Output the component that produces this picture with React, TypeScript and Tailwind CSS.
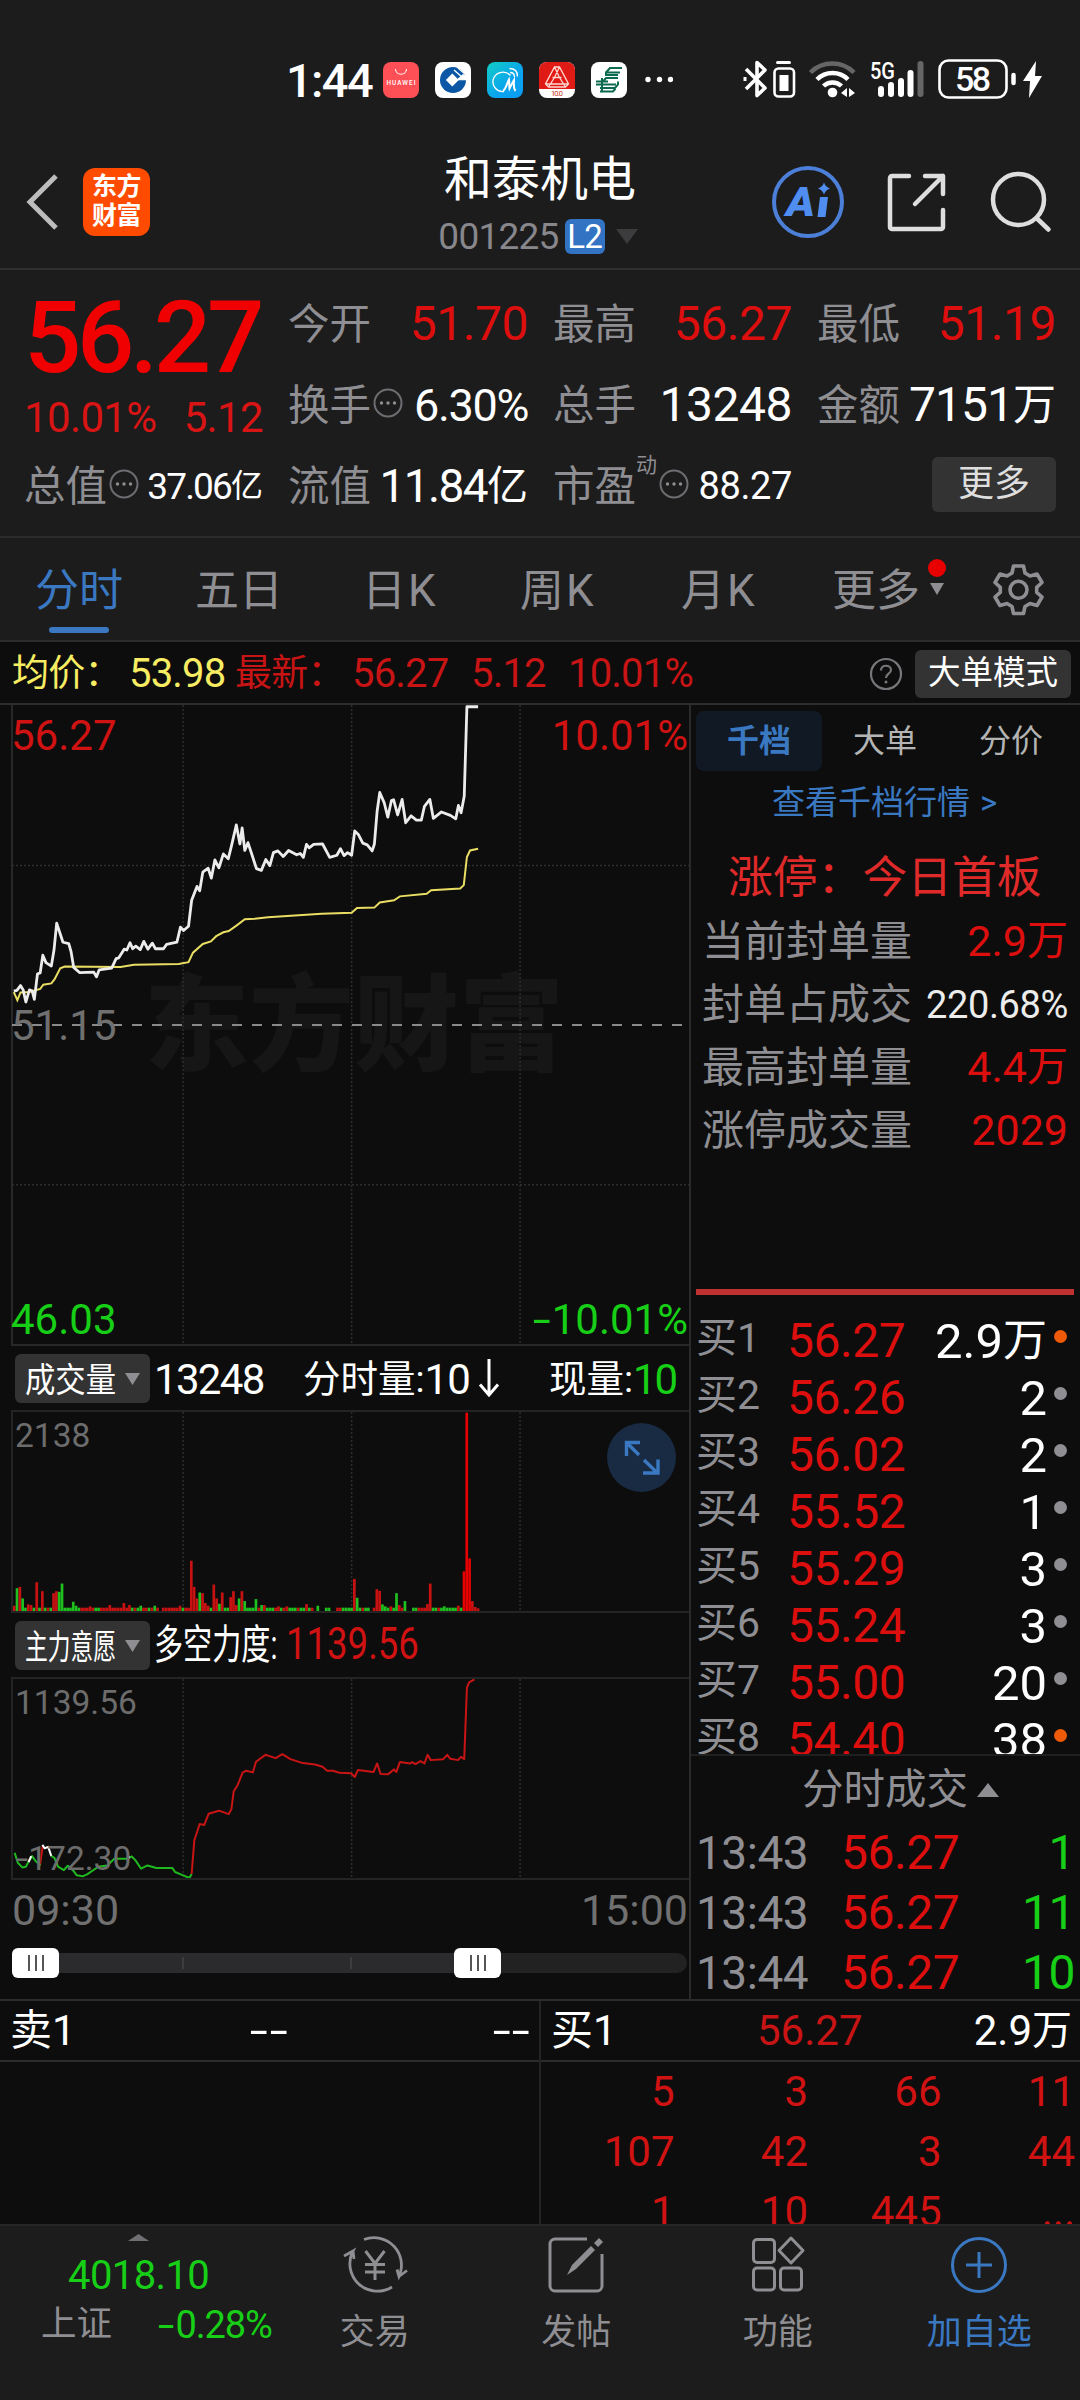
import clsx from "clsx";
import type { ReactNode } from "react";

const quotes = [
  { label: "今开", value: "51.70" },
  { label: "最高", value: "56.27" },
  { label: "最低", value: "51.19" },
];

const periods = [
  { label: "五日", className: "left-[195px]" },
  { label: "日K", className: "left-[362px] tracking-[2px]" },
  { label: "周K", className: "left-[520px] tracking-[2px]" },
  { label: "月K", className: "left-[681px] tracking-[2px]" },
];

const limitStats = [
  { label: "当前封单量", value: "2.9", unit: "万" },
  { label: "封单占成交", value: "220.68%", white: true },
  { label: "最高封单量", value: "4.4", unit: "万" },
  { label: "涨停成交量", value: "2029" },
];

const bids = [
  { price: "56.27", qty: "2.9", unit: "万", hot: true },
  { price: "56.26", qty: "2" },
  { price: "56.02", qty: "2" },
  { price: "55.52", qty: "1" },
  { price: "55.29", qty: "3" },
  { price: "55.24", qty: "3" },
  { price: "55.00", qty: "20" },
  { price: "54.40", qty: "38", hot: true },
];

const trades = [
  { time: "13:43", price: "56.27", qty: "1" },
  { time: "13:43", price: "56.27", qty: "11" },
  { time: "13:44", price: "56.27", qty: "10" },
];

const queue = ["5", "3", "66", "11", "107", "42", "3", "44", "1", "10", "445", "..."];

const priceLine =
  "31,695 38,693 46,682 52,692 58,720 66,692 72,694 77,714 84,655 90,653 96,612 103,629 115,637 121,600 127,538 141,582 154,585 159,603 165,640 178,652 210,651 216,662 222,646 250,642 260,620 266,618 278,598 284,600 291,583 297,597 304,591 314,599 322,580 331,598 341,584 348,597 366,597 373,587 396,582 404,547 411,555 422,545 429,485 441,453 447,463 454,420 466,411 473,434 481,392 490,410 500,378 511,389 518,360 529,311 537,355 542,318 548,370 555,352 564,380 574,412 585,416 595,391 604,405 612,375 622,371 634,384 646,370 664,380 672,377 679,386 686,356 692,364 702,356 722,355 738,386 754,381 762,366 770,382 778,375 787,381 794,325 802,333 812,353 822,357 833,371 838,355 844,280 850,236 860,260 868,293 876,255 881,253 890,288 900,252 908,306 920,290 932,300 943,300 950,268 962,252 970,296 988,281 1008,289 1020,297 1026,266 1032,283 1039,245 1045,38 1070,38";

const averageLine =
  "31,697 39,716 46,698 66,697 90,690 97,680 115,677 122,668 135,642 145,638 270,639 300,634 400,632 422,628 432,606 454,586 472,580 484,568 500,559 512,556 530,543 548,529 570,528 600,524 720,516 787,514 799,503 838,502 850,490 882,485 895,476 955,470 965,462 1030,458 1038,450 1045,385 1052,370 1070,366";

const forceLines = [
  { color: "#1fb81f", points: "33,730 40,760 50,774 58,772 66,752 72,740 80,755 88,765 92,765" },
  { color: "#ffffff", points: "64,758 70,740" },
  { color: "#c81414", points: "90,765 93,735 96,708" },
  { color: "#ffffff", points: "95,706 100,716 108,712 115,740" },
  {
    color: "#1fb81f",
    points:
      "115,740 122,745 130,772 143,782 152,769 165,785 172,798 185,801 195,795 220,772 240,768 256,748 285,748 295,741 303,752 316,778 330,768 350,776 386,776 392,788 410,798 424,806 429,794",
  },
  { color: "#ffffff", points: "285,749 290,741" },
  {
    color: "#c81414",
    points:
      "429,794 435,692 447,643 457,646 467,612 490,603 500,607 512,613 518,598 523,545 532,525 543,488 551,482 566,487 573,455 594,434 617,444 632,432 650,447 678,459 705,463 722,470 732,482 745,482 760,488 786,490 794,501 801,480 836,486 844,460 852,492 868,493 882,478 887,486 895,456 918,460 922,456 930,462 941,453 950,460 957,434 964,450 992,447 1001,434 1008,446 1025,450 1032,440 1039,447 1045,232 1050,215 1062,206",
  },
];

// one letter per minute: r = up, g = down, . = no trade
const volumeColors =
  "rgrggrrgrg" +
  "rgrgrrgggg" +
  "ggggrrrrrg" +
  "grrrrrrrrr" +
  "rrgrggrrgr" +
  "gr.rrrrrrr" +
  "grrrrrgrrr" +
  "grrgrggrrr" +
  "grgggggrgr" +
  "gggrrgrrgg" +
  "grggrgr.g." +
  ".gg..rrggg" +
  "grggrgg.rr" +
  "rgggrggrrg" +
  "..ggrrrrrg" +
  "grggggggrg" +
  "rrrrrr";

// bar heights by minute, everything else is a stub
const volumeHeights: Record<number, number> = {
  0: 16, 1: 69, 2: 73, 3: 38, 5: 20, 6: 18, 8: 87, 10: 60, 14: 54, 15: 60, 16: 58, 17: 83,
  21: 28, 22: 16, 27: 14, 34: 18, 39: 24, 41: 18, 45: 16, 50: 16, 59: 16, 63: 152, 64: 73,
  65: 38, 66: 56, 67: 54, 68: 24, 69: 16, 71: 80, 72: 38, 73: 22, 74: 56, 77: 42, 78: 60,
  79: 18, 80: 38, 81: 60, 82: 30, 86: 36, 88: 18, 89: 18, 94: 14, 97: 14, 104: 21, 108: 16,
  121: 97, 122: 40, 129: 66, 130: 61, 131: 20, 132: 14, 134: 14, 136: 54, 137: 18, 139: 30,
  147: 21, 148: 83, 153: 14, 158: 16, 160: 120, 161: 600, 162: 159, 163: 30, 164: 12, 165: 8,
};

const More = () => (
  <svg className="size-[30px] shrink-0 -mt-1 ml-0.5" viewBox="0 0 30 30" fill="none">
    <circle cx="15" cy="15" r="13.5" stroke="#6e6e72" strokeWidth="2" />
    <circle cx="8.5" cy="15" r="1.7" fill="#8e8e93" />
    <circle cx="15" cy="15" r="1.7" fill="#8e8e93" />
    <circle cx="21.5" cy="15" r="1.7" fill="#8e8e93" />
  </svg>
);

const Down = ({ className }: { className?: string }) => (
  <svg className={className} viewBox="0 0 10 10" preserveAspectRatio="none" fill="currentColor">
    <path d="M0 0h10L5 10z" />
  </svg>
);

// Roboto's hyphen is too short for a minus sign
const Dash = () => <span className="inline-block scale-x-[1.55] px-[4px] tracking-normal">-</span>;

const StatusBar = () => (
  <div className="h-[122px] pt-[58px] pl-[286px] flex items-start text-white">
    <div className="w-[97px] h-[44px] flex items-center text-[47px] font-medium leading-none tracking-[-0.035em]">
      1:44
    </div>
    <div className="flex gap-4 mt-1">
      <svg className="size-9" viewBox="0 0 36 36">
        <rect width="36" height="36" rx="8" fill="#fd5056" />
        <path d="M12.5 7c0 7 11 7 11 0" stroke="#fff" fill="none" strokeWidth="1.1" />
        <text x="18" y="22.6" fontSize="6.4" fontWeight="500" fill="#fff" textAnchor="middle" textLength="29">
          HUAWEI
        </text>
      </svg>
      <svg className="size-9" viewBox="0 0 36 36">
        <rect width="36" height="36" rx="8" fill="#fff" />
        <circle cx="18" cy="18" r="13" fill="#0b57a6" />
        <path d="M17.3 11.5l6.5 6.5-6.5 6.5-6.5-6.5z" fill="#fff" />
        <path d="M21 18.3h11V14l-4-2z" fill="#fff" />
        <path d="M19 8l8.5 7.5M22 5l9 8" stroke="#fff" strokeWidth="1.3" fill="none" />
      </svg>
      <svg className="size-9" viewBox="0 0 36 36">
        <defs>
          <linearGradient id="midea" x1="0" y1="0" x2="1" y2="1">
            <stop offset="0" stopColor="#12cdc4" />
            <stop offset=".6" stopColor="#0aa4ef" />
            <stop offset="1" stopColor="#0a9cf2" />
          </linearGradient>
        </defs>
        <rect width="36" height="36" rx="8" fill="url(#midea)" />
        <path d="M23.5 13.5A10 9.7 0 1 0 17 29.5" stroke="#fff" strokeWidth="1.3" fill="none" />
        <path d="M16 29c3-2 4-8 6-11.5.5 3 0 6 .5 9 1.5-3 3-6 4.5-8.5 0 3.5-1 8 1.500 11" stroke="#fff" strokeWidth="2" fill="none" />
        <path d="M23 10.5c3 0 4.5 1.5 4.5 4.5M22.5 6.5c5 0 8 3 8 8" stroke="#fff" strokeWidth="1.3" fill="none" />
      </svg>
      <svg className="size-9" viewBox="0 0 36 36">
        <rect width="36" height="36" rx="8" fill="#fff" />
        <path d="M8 0h20a8 8 0 0 1 8 8v19H0V8a8 8 0 0 1 8-8z" fill="#e01a15" />
        <path
          d="M15.5 5h5l9 17-3 3h-17l-3-3zM15.5 5l5 10.5 6 9.5M20.5 5l-5 10.5-6 9.5M6.5 22h23M13.5 15.5h9"
          stroke="#ffd9cf"
          strokeWidth="1.3"
          fill="none"
        />
        <text x="18" y="34.3" fontSize="7.5" fill="#c9361c" textAnchor="middle" textLength="12">
          10.0
        </text>
      </svg>
      <svg className="size-9" viewBox="0 0 36 36">
        <rect width="36" height="36" rx="8" fill="#fff" />
        <path
          d="M31 6H19l-4 4.5v2.5h12M29 10.5H16M5 19.5h12M27 16H15l-3 3.5M27 19.5v3L24 26H9M5 22.5h20M9 29.5h13l2.5-3M11 16v13"
          stroke="#0c6b4f"
          strokeWidth="2"
          fill="none"
        />
      </svg>
    </div>
    <svg className="w-7 h-9 mt-1 ml-[18px]" viewBox="0 0 28 36" fill="#fff">
      <circle cx="3" cy="17.5" r="2.7" />
      <circle cx="14.500" cy="17.5" r="2.7" />
      <circle cx="25.500" cy="17.5" r="2.7" />
    </svg>
    <svg className="w-[310px] h-[44px] ml-[67px]" viewBox="740 58 310 44" fill="none" stroke="#fff">
      <path d="M746 69l19 19-8 7.5v-33l8 7.5-19 19" strokeWidth="3.6" strokeLinejoin="round" />
      <path d="M745 77v4" strokeWidth="3" />
      <rect x="774.5" y="68.5" width="19.5" height="28" rx="4" strokeWidth="2.6" />
      <path d="M777.5 62.500h12" strokeWidth="3" strokeLinecap="round" />
      <rect x="779.5" y="75" width="9" height="16" fill="#fff" stroke="none" />
      <g strokeWidth="4.5">
        <path d="M810.5 72.5a31 31 0 0 1 43.5 0" stroke="#666" />
        <path d="M817 79.5a22 22 0 0 1 31 0" />
        <path d="M823.5 86a13 13 0 0 1 18 0" />
      </g>
      <circle cx="832.5" cy="92.5" r="4.8" fill="#fff" stroke="none" />
      <path d="M841 93l6-5v9zM849 88v9l6-4z" fill="#fff" stroke="none" />
      <text x="870" y="79" fontSize="23" fontWeight="500" fill="#fff" stroke="none" textLength="25" lengthAdjust="spacingAndGlyphs">
        5G
      </text>
      <g strokeWidth="6" strokeLinecap="round">
        <path d="M881 89v5M891 85v9M901 81v13M910.5 73v21" />
        <path d="M920.5 64v30" stroke="#666" />
      </g>
      <rect x="939.5" y="60.5" width="67" height="37" rx="9" strokeWidth="2.6" />
      <text x="955" y="91" fontSize="34" fontWeight="500" fill="#fff" stroke="none" textLength="36">
        58
      </text>
      <path d="M1013.5 75v8" strokeWidth="4.5" strokeLinecap="round" />
      <path d="M1036 61l-13 20h7l-1 17 13-22h-7z" fill="#fff" stroke="none" />
    </svg>
  </div>
);

const Header = () => (
  <header className="h-[148px] border-b-2 border-[#2f2f2f] flex items-start">
    <svg className="w-[34px] h-[60px] ml-[26px] mt-[50px]" viewBox="0 0 34 60" fill="none">
      <path d="M30 4L4 30l26 26" stroke="#bdbdbd" strokeWidth="5" />
    </svg>
    <div className="w-[67px] h-[68px] ml-[23px] mt-[46px] rounded-xl bg-[#ff4b00] text-white font-bold text-[25px] leading-[29px] tracking-[-0.5px] flex flex-col items-center justify-center pb-0.5">
      <span>东方</span>
      <span>财富</span>
    </div>
    <div className="w-[390px] ml-[194px] mt-[29px] flex flex-col items-center">
      <div className="h-[58px] ml-0.5 flex items-center text-[48px] leading-none text-white">和泰机电</div>
      <div className="h-[54px] flex items-center text-[#87878c] text-[37px] leading-none tracking-[-0.02em]">
        001225
        <span className="w-10 h-[35px] ml-[6px] rounded-md bg-[#3273c4] text-white text-[33px] flex items-center justify-center">
          L2
        </span>
        <Down className="w-[22px] h-[15px] ml-[11px] mr-0.5 text-[#3c3c3e]" />
      </div>
    </div>
    <svg className="w-[290px] h-[80px] ml-[36px] mt-[40px]" viewBox="770 162 290 80" fill="none">
      <circle cx="808" cy="202" r="34" stroke="#4c80d8" strokeWidth="4" />
      <text x="786" y="215.5" fontSize="41" fontWeight="900" fontStyle="italic" fill="#4f8df0" textLength="29" lengthAdjust="spacingAndGlyphs">
        A
      </text>
      <path d="M820 197h8l-2.5 20h-8z" fill="#4f8df0" />
      <path d="M824 182.5q1.5 4.5 6 6-4.5 1.5-6 6-1.5-4.5-6-6 4.5-1.5 6-6z" fill="#4f8df0" />
      <g stroke="#dedede" strokeWidth="4.5" strokeLinecap="round" strokeLinejoin="round">
        <path d="M909 176h-17a2 2 0 0 0-2 2v49a2 2 0 0 0 2 2h49a2 2 0 0 0 2-2v-17" />
        <path d="M925 176h18v18M943 176l-28 28" />
        <circle cx="1018.5" cy="199.5" r="25.5" />
        <path d="M1037 218.5l11.5 11" />
      </g>
    </svg>
  </header>
);

const Cell = ({ label, icon, sup, children }: { label: string; icon?: boolean; sup?: string; children: ReactNode }) => (
  <div className="flex items-center">
    <span className="text-[#8e8e93] text-[41.5px] pt-0.5">{label}</span>
    {sup && <sup className="text-[#8e8e93] text-[21px] -top-5 leading-none">{sup}</sup>}
    {icon && <More />}
    <span className="ml-auto flex items-center pt-px">{children}</span>
  </div>
);

const Summary = () => (
  <section className="h-[268px] pt-[13px] pl-6 border-b-2 border-[#2c2c2c] grid grid-cols-[239px_240px_239px_239px] auto-rows-[81px] gap-x-[25px] whitespace-nowrap leading-none text-white">
    <div className="row-span-2 flex flex-col">
      <div className="h-[108px] flex items-center text-[#f00000] font-medium text-[101px] tracking-[-0.043em]">
        56.27
      </div>
      <div className="h-[54px] flex items-center justify-between text-[#d81414] text-[42px] tracking-[-0.015em]">
        <span>10.01%</span>
        <span>5.12</span>
      </div>
    </div>
    {quotes.map((q) => (
      <Cell key={q.label} label={q.label}>
        <span className="text-[#dc0e0e] text-[48px] tracking-[-0.01em]">{q.value}</span>
      </Cell>
    ))}
    <Cell label="换手" icon>
      <span className="text-[45px] tracking-[-0.03em]">6.30%</span>
    </Cell>
    <Cell label="总手">
      <span className="text-[48px] tracking-[-0.01em]">13248</span>
    </Cell>
    <Cell label="金额">
      <span className="text-[48px] tracking-[-0.02em]">7151</span>
      <span className="text-[43px]">万</span>
    </Cell>
    <Cell label="总值" icon>
      <span className="text-[37px] tracking-[-0.05em]">37.06</span>
      <span className="text-[32px]">亿</span>
    </Cell>
    <Cell label="流值">
      <span className="text-[46px] tracking-[-0.035em]">11.84</span>
      <span className="text-[41px]">亿</span>
    </Cell>
    <Cell label="市盈" icon sup="动">
      <span className="text-[38px] tracking-[-0.01em]">88.27</span>
    </Cell>
    <div className="flex items-center justify-end pb-[3px]">
      <div className="w-[124px] h-[55px] rounded-md bg-[#333] text-[#dedede] text-[36px] flex items-center justify-center">
        更多
      </div>
    </div>
  </section>
);

const Tabs = () => (
  <nav className="h-[104px] border-b-2 border-[#2c2c2c] relative text-[44px] leading-none text-[#8e8e93]">
    <div className="absolute left-[35px] top-[31px] text-[#3a78c2]">
      分时
      <div className="w-[60px] h-1.5 rounded-full bg-[#3a78c2] ml-[14px] mt-[14px]" />
    </div>
    {periods.map((p) => (
      <span key={p.label} className={clsx("absolute top-[31px]", p.className)}>
        {p.label}
      </span>
    ))}
    <span className="absolute left-[832px] top-[31px]">更多</span>
    <span className="absolute left-[928px] top-[21px] size-[18px] rounded-full bg-[#e80000]" />
    <Down className="absolute left-[930px] top-[45px] w-[14px] h-3" />
    <svg className="absolute left-[992px] top-[25px] size-[53px]" viewBox="0 0 53 53" fill="none" stroke="#8e8e93" strokeWidth="3.6">
      <path
        strokeLinejoin="round"
        d="M21.5 3h10l1.5 7 5 3 7-2 5 8.5-5.3 4.8v5L50 34l-5 8.5-7-2-5 3-1.5 7h-10l-1.5-7-5-3-7 2-5-8.5 5.3-4.7v-5L3 19.5 8 11l7 2 5-3z"
      />
      <circle cx="26.5" cy="26.8" r="8.5" />
    </svg>
  </nav>
);

const PriceBar = () => (
  <div className="h-[63px] border-b-2 border-[#2e2e2e] pl-3 pt-[2px] pr-[9px] flex items-center text-[40px] leading-none whitespace-nowrap tracking-[-0.02em]">
    <div className="w-[223px] text-[#f7ec62] flex items-center">
      <span className="w-[117px] text-[37px]">均价：</span>53.98
    </div>
    <div className="text-[#c81414] flex items-center">
      <span className="w-[117px] text-[37px]">最新：</span>
      <span className="w-[119px]">56.27</span>
      <span className="w-[97px]">5.12</span>
      <span>10.01%</span>
    </div>
    <svg className="size-[34px] ml-auto mr-3" viewBox="0 0 34 34" fill="none">
      <circle cx="17" cy="17" r="15" stroke="#77777b" strokeWidth="2.2" />
      <path d="M12 13.5c0-6.5 10-6 10-.5 0 4-5 3.5-5 8" stroke="#77777b" strokeWidth="2.2" />
      <circle cx="17" cy="25" r="1.5" fill="#77777b" />
    </svg>
    <div className="w-[156px] h-12 rounded-md bg-[#333] text-white text-[32.5px] tracking-normal flex items-center justify-center">
      大单模式
    </div>
  </div>
);

const Grid = ({ top, bottom }: { top: number; bottom: number }) => (
  <g stroke="#2d2d2d" strokeWidth="1.5" strokeDasharray="2 2">
    {[410, 787, 1164].map((x) => (
      <path key={x} d={`M${x} ${top}V${bottom}`} vectorEffect="non-scaling-stroke" />
    ))}
  </g>
);

const PriceChart = () => (
  <div className="relative h-[641px] ml-[11px] border-l-2 border-b-2 border-[#282828] text-[42px] leading-none">
    <div className="absolute inset-x-0 top-[269px] pl-[131px] text-[105px] font-black text-[#161616]">东方财富</div>
    <svg className="absolute top-0 -left-px w-[677px] h-full" viewBox="27 34 1515 1476" preserveAspectRatio="none" fill="none">
      <Grid top={34} bottom={1510} />
      <g stroke="#2d2d2d" strokeWidth="1.5" strokeDasharray="2 2">
        <path d="M27 405H1542" vectorEffect="non-scaling-stroke" />
        <path d="M27 1142H1542" vectorEffect="non-scaling-stroke" />
      </g>
      <path d="M27 773H1530" stroke="#8a8a8a" strokeWidth="2" strokeDasharray="10 10" vectorEffect="non-scaling-stroke" />
      <polyline points={averageLine} stroke="#e9de63" strokeWidth="2" vectorEffect="non-scaling-stroke" />
      <polyline points={priceLine} stroke="#ececec" strokeWidth="2.8" strokeLinejoin="round" vectorEffect="non-scaling-stroke" />
    </svg>
    <span className="absolute -left-0.5 top-[10px] text-[#d01212]">56.27</span>
    <span className="absolute right-px top-[10px] text-[#d01212]">10.01%</span>
    <span className="absolute -left-0.5 top-[300px] text-[#707070]">51.15</span>
    <span className="absolute -left-0.5 bottom-[3px] text-[#17cf17]">46.03</span>
    <span className="absolute right-px bottom-[3px] text-[#17cf17]">
      <Dash />
      10.01%
    </span>
  </div>
);

const Pill = ({ children }: { children: ReactNode }) => (
  <div className="w-[135px] h-[49px] ml-[15px] mr-[4px] shrink-0 rounded-md bg-[#333] flex items-center relative">
    <span className="ml-2.5 w-[92px]">{children}</span>
    <Down className="absolute left-[110px] top-[19px] w-[15px] h-[12px] text-[#8e8e93]" />
  </div>
);

const VolumeChart = () => (
  <>
    <div className="h-[64px] flex items-center text-white text-[42px] leading-none whitespace-nowrap">
      <Pill>
        <span className="inline-block origin-left scale-x-[0.88] text-[34.5px]">成交量</span>
      </Pill>
      <span className="w-[149px] pt-[3px] tracking-[-0.04em]">13248</span>
      <span className="w-[246px] pt-[3px] flex items-center">
        <span className="text-[37.5px]">分时量:</span>
        <span className="tracking-[-0.02em]">10</span>
        <svg className="w-[22px] h-[38px] ml-2 -mt-[3px]" viewBox="0 0 22 38" fill="none" stroke="#fff" strokeWidth="3">
          <path d="M11 0v36M2 25.5l9 10.5 9-10.5" />
        </svg>
      </span>
      <span className="text-[37.5px] pt-[3px]">现量:</span>
      <span className="text-[#17cf17] tracking-[-0.05em] pt-[3px]">10</span>
    </div>
    <div className="relative h-[203px] ml-[11px] border-2 border-r-0 border-[#242424]">
      <svg className="absolute top-0 -left-px w-[677px] h-full" viewBox="27 244 1515 602" preserveAspectRatio="none">
        <Grid top={244} bottom={846} />
        {volumeColors.split("").map((c, i) => {
          const h = volumeHeights[i] ?? 10;
          return c === "." ? null : (
            <rect key={i} x={29 + i * 6.29} y={846 - h} width="6" height={h} fill={c === "r" ? (i > 159 && i < 163 ? "#e60000" : "#c81212") : "#1fbf1f"} />
          );
        })}
      </svg>
      <span className="absolute left-[2px] top-[7px] text-[#6c6c6c] text-[33.5px] leading-none">2138</span>
      <div className="absolute left-[594px] top-[11px] size-[69px] rounded-full bg-[#182b42]">
        <svg className="size-full" viewBox="0 0 69 69" fill="none" stroke="#3a78c2" strokeWidth="3.4">
          <path d="M33 19.5H19.5V33M19.5 19.5L32 32M51 36.5V50H36M50.5 50L37 37" />
        </svg>
      </div>
    </div>
  </>
);

const ForceChart = () => (
  <>
    <div className="h-[64px] flex items-center text-white text-[41px] leading-none whitespace-nowrap">
      <Pill>
        <span className="inline-block origin-left scale-x-[0.66] text-[34.5px]">主力意愿</span>
      </Pill>
      <span className="w-[132px]">
        <span className="inline-block origin-left scale-x-[0.71]">多空力度:</span>
      </span>
      <span className="inline-block origin-left scale-x-[0.84] text-[43.5px] text-[#d01212]">1139.56</span>
    </div>
    <div className="relative h-[203px] ml-[11px] border-2 border-r-0 border-[#242424] text-[#6c6c6c] text-[33.5px] leading-none">
      <svg className="absolute top-0 -left-px w-[677px] h-full" viewBox="27 205 1515 601" preserveAspectRatio="none" fill="none">
        <Grid top={205} bottom={806} />
        {forceLines.map((l) => (
          <polyline key={l.points} points={l.points} stroke={l.color} strokeWidth="2" strokeLinejoin="round" vectorEffect="non-scaling-stroke" />
        ))}
      </svg>
      <span className="absolute left-[2px] top-[7px]">1139.56</span>
      <span className="absolute left-[2px] bottom-[3px]">
        <span className="inline-block scale-x-[1.4] px-[2px]">-</span>172.30
      </span>
    </div>
  </>
);

const Handle = () => (
  <div className="absolute -top-[5px] w-[47px] h-[30px] rounded-md bg-white flex items-center justify-center gap-[5px]">
    <i className="w-[2px] h-4 bg-[#555]" />
    <i className="w-[2px] h-4 bg-[#555]" />
    <i className="w-[2px] h-4 bg-[#555]" />
  </div>
);

const TimeAxis = () => (
  <>
    <div className="h-[73px] pt-[9px] pl-[12px] pr-px flex justify-between text-[#707070] text-[43px] leading-none">
      <span>09:30</span>
      <span>15:00</span>
    </div>
    <div className="relative ml-[12px] mr-[2px] h-5 rounded-full bg-[#222]">
      <div className="w-[465px] h-5 rounded-full bg-[#2b2b2d] flex items-center">
        <i className="w-[2px] h-3 ml-[170px] bg-[#3d3d3f]" />
        <i className="w-[2px] h-3 ml-[166px] bg-[#3d3d3f]" />
      </div>
      <div className="absolute left-0 top-0">
        <Handle />
      </div>
      <div className="absolute left-[442px] top-0">
        <Handle />
      </div>
    </div>
  </>
);

const OrderBook = () => (
  <aside className="w-[391px] border-l-2 border-[#2a2a2a] leading-none whitespace-nowrap">
    <div className="mt-[6px] ml-[5px] flex h-[60px] text-[32px] text-[#b4b4b4]">
      <span className="w-[126px] rounded-lg bg-[#111a24] text-[#3a78c2] font-bold flex items-center justify-center">千档</span>
      <span className="w-[126px] flex items-center justify-center">大单</span>
      <span className="w-[126px] flex items-center justify-center">分价</span>
    </div>
    <div className="h-[62px] pl-[81px] flex items-center text-[#3a78c2] text-[33px]">
      查看千档行情<span className="ml-2.5 text-[33px]">&gt;</span>
    </div>
    <div className="h-[76px] pt-[14px] pl-[37px] flex items-center text-[#e02a2a] text-[44.8px]">涨停：今日首板</div>
    <div className="pt-px pl-[11px] pr-[12px]">
      {limitStats.map((s) => (
        <div key={s.label} className="h-[63px] flex items-center">
          <span className="text-[#8e8e93] text-[42px]">{s.label}</span>
          <span className={clsx("ml-auto flex items-center", s.white ? "text-[#ececec] text-[38px] tracking-[-0.01em]" : "text-[#dc0e0e] text-[43px]")}>
            {s.value}
            {s.unit && <span className="text-[41px]">{s.unit}</span>}
          </span>
        </div>
      ))}
    </div>
    <div className="mt-[127px] ml-[5px] mr-[6px] h-1.5 bg-[#c03131]" />
    <div className="h-[461px] pt-[15px] pl-[5px] overflow-hidden border-b-2 border-[#202020]">
      {bids.map((b, i) => (
        <div key={b.price} className="h-[57px] flex items-center">
          <span className="w-[91px] text-[#8e8e93] text-[41px] pb-px">买{i + 1}</span>
          <span className="text-[#dc0e0e] text-[48px] tracking-[-0.01em] pt-[5px]">{b.price}</span>
          <span className="ml-auto text-white text-[49px] flex items-center pt-[5px]">
            {b.qty}
            {b.unit && <span className="text-[44px]">{b.unit}</span>}
          </span>
          <i className={clsx("size-[13px] rounded-full ml-[7px] mr-[13px] -mt-[4px]", b.hot ? "bg-[#ee5a08]" : "bg-[#8e8e93]")} />
        </div>
      ))}
    </div>
    <div className="h-[67px] pl-[111px] flex items-center text-[#8e8e93] text-[41.5px]">
      分时成交
      <Down className="w-[22px] h-[14px] ml-[9px] rotate-180" />
    </div>
    {trades.map((t, i) => (
      <div key={i} className="h-[60px] pl-[5px] pr-[5px] flex items-center text-[48px] tracking-[-0.01em]">
        <span className="w-[145px] text-[#8e8e93] text-[46px]">{t.time}</span>
        <span className="text-[#dc0e0e]">{t.price}</span>
        <span className="ml-auto text-[#17cf17]">{t.qty}</span>
      </div>
    ))}
  </aside>
);

const Queue = () => (
  <section className="h-[225px] border-t-2 border-[#2c2c2c] flex text-[42px] leading-none whitespace-nowrap overflow-hidden">
    <div className="w-[541px] border-r-2 border-[#242424]">
      <div className="h-[61px] pl-[10px] pr-2 border-b-2 border-[#2c2c2c] flex items-center text-white">
        <span className="w-[239px] text-[42px]">卖1</span>
        <span>
          <Dash />
          <Dash />
        </span>
        <span className="ml-auto">
          <Dash />
          <Dash />
        </span>
      </div>
    </div>
    <div className="flex-1">
      <div className="h-[61px] pl-[10px] pr-2 border-b-2 border-[#2c2c2c] flex items-center text-white">
        <span className="w-[206px] text-[42px]">买1</span>
        <span className="text-[#c81414]">56.27</span>
        <span className="ml-auto flex items-center">
          2.9<span className="text-[40px]">万</span>
        </span>
      </div>
      <div className="grid grid-cols-4 auto-rows-[60px] w-[534px] text-[#d01212]">
        {queue.map((n, i) => (
          <span key={i} className="flex items-center justify-end">
            {n}
          </span>
        ))}
      </div>
    </div>
  </section>
);

const NavItem = ({ label, active, children }: { label: string; active?: boolean; children: ReactNode }) => (
  <div className={clsx("w-[201.5px] flex flex-col items-center text-[35px]", active ? "text-[#3a78c2]" : "text-[#8e8e93]")}>
    <svg className="size-[66px] mt-[6px]" viewBox="0 0 66 66" fill="none" stroke="currentColor" strokeWidth="3">
      {children}
    </svg>
    <span className="mt-[17px]">{label}</span>
  </div>
);

const BottomNav = () => (
  <footer className="h-[176px] border-t-2 border-[#262626] flex leading-none whitespace-nowrap">
    <div className="w-[274px] pl-[41px] text-[#17cf17]">
      <Down className="w-[21px] h-[7px] mt-2 ml-[87px] rotate-180 text-[#707074]" />
      <div className="mt-[15px] ml-[27px] text-[40px] tracking-[-0.015em]">4018.10</div>
      <div className="mt-[10px] flex items-center text-[38px]">
        <span className="w-[116px] text-[#8e8e93] text-[35.5px]">上证</span>
        <span className="tracking-[-0.03em]">
          <Dash />
          0.28%
        </span>
      </div>
    </div>
    <NavItem label="交易">
      <path d="M22 7.5a27.500 27.500 0 0 1 35 37l-2-7M57 44.500l8-6" strokeWidth="2.8" />
      <path d="M50 55a27.500 27.500 0 0 1-39-36l-9 5M11 19l1 8" strokeWidth="2.8" />
      <path d="M23.5 19L33 31.5 42.5 19M33 31.5V48M23 32.5h20M23 40h20" />
    </NavItem>
    <NavItem label="发帖">
      <path d="M44 7H12a5 5 0 0 0-5 5v42a5 5 0 0 0 5 5h42a5 5 0 0 0 5-5V22" />
      <path d="M24 43l5-10L48 14l4 4-19 19zM51 11l5-5 4 4-5 5z" fill="currentColor" stroke="none" />
    </NavItem>
    <NavItem label="功能">
      <rect x="8.5" y="7.5" width="21" height="23" rx="3.5" />
      <path d="M46 6l12 12.5L46 31 34 18.5z" strokeLinejoin="round" />
      <rect x="8.5" y="36" width="21" height="22" rx="3.5" />
      <rect x="35.5" y="36" width="21" height="22" rx="3.5" />
    </NavItem>
    <NavItem label="加自选" active>
      <circle cx="33" cy="33" r="26.5" />
      <path d="M33 20v26M20 33h26" />
    </NavItem>
  </footer>
);

const App = () => {
  return (
    <div className="w-[1080px] h-[2400px] overflow-hidden bg-[#0d0d0d] font-[Roboto,'Noto_Sans_CJK_SC',sans-serif] flex flex-col">
      <div className="bg-[#1c1c1c]">
        <StatusBar />
        <Header />
        <Summary />
        <Tabs />
      </div>
      <PriceBar />
      <main className="flex h-[1294px]">
        <div className="w-[689px]">
          <PriceChart />
          <VolumeChart />
          <ForceChart />
          <TimeAxis />
        </div>
        <OrderBook />
      </main>
      <Queue />
      <div className="bg-[#1c1c1c] flex-1">
        <BottomNav />
      </div>
    </div>
  );
};

export default App;
